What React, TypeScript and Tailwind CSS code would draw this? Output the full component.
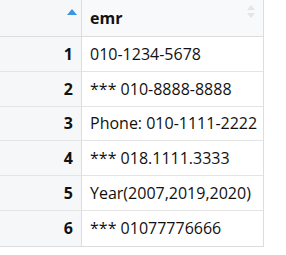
const rows = [
  '010-1234-5678',
  '*** 010-8888-8888',
  'Phone: 010-1111-2222',
  '*** 018.1111.3333',
  'Year(2007,2019,2020)',
  '*** 01077776666',
]

export default function App() {
  return (
    <div className="w-[286px] h-[255px] bg-white" style={{ fontFamily: '"Open Sans", sans-serif' }}>
      <div className="w-[264px] border-r border-b border-[#dddddd] text-[16px] text-[#111111]">
        <div className="flex h-[37px] border-b border-[#dddddd] bg-[#f7f9fb]">
          <div className="relative w-[82px] border-r border-[#dddddd] bg-[#f5f7f9]">
            <svg className="absolute left-[67px] top-[9px]" width="10" height="6" viewBox="0 0 10 6">
              <path d="M5 0 L10 6 L0 6 Z" fill="#3a95e4" />
            </svg>
          </div>
          <div className="relative flex-1 flex items-end px-2 pb-[6px] font-bold">
            emr
            <svg className="absolute right-[8px] top-[5px]" width="8" height="13" viewBox="0 0 8 13">
              <path d="M4 0 L8 5 L0 5 Z" fill="#e3e5e8" />
              <path d="M4 13 L8 8 L0 8 Z" fill="#e3e5e8" />
            </svg>
          </div>
        </div>
        {rows.map((r, i) => (
          <div key={i} className={`flex h-[34.8px] ${i < rows.length - 1 ? 'border-b border-[#e4e4e4]' : ''}`}>
            <div className="w-[82px] border-r border-[#dddddd] bg-[#f5f7f9] flex items-center justify-end pr-2 font-bold">
              {i + 1}
            </div>
            <div className="flex-1 flex items-center pl-2 whitespace-nowrap overflow-hidden">{r}</div>
          </div>
        ))}
      </div>
    </div>
  )
}
